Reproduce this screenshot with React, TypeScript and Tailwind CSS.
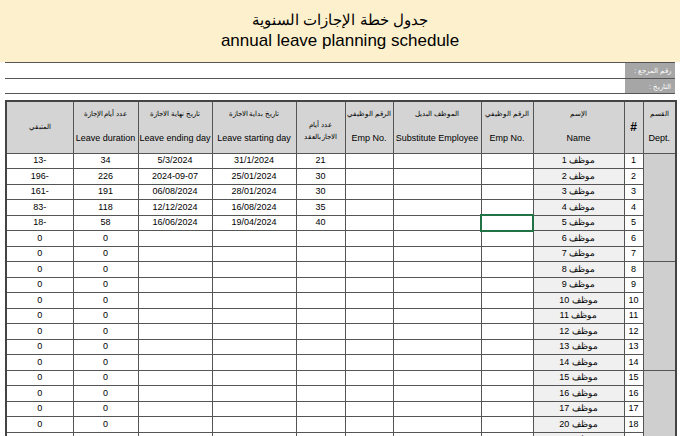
const rows: [string, string, string, string, string][] = [
  ['13-', '34', '5/3/2024', '31/1/2024', '21'],
  ['196-', '226', '2024-09-07', '25/01/2024', '30'],
  ['161-', '191', '06/08/2024', '28/01/2024', '30'],
  ['83-', '118', '12/12/2024', '16/08/2024', '35'],
  ['18-', '58', '16/06/2024', '19/04/2024', '40'],
]

const names = [1, 2, 3, 4, 5, 6, 7, 8, 9, 10, 11, 12, 13, 14, 15, 16, 17, 20, 21]

const td = 'border border-[#555] h-[15.5px] p-0 text-center'

export default function App() {
  return (
    <div className="w-[680px] h-[436px] overflow-hidden bg-white text-black" style={{ fontFamily: '"Liberation Sans", "Noto Sans", sans-serif' }}>
      <div className="h-[62px] bg-[#fdf0cd] flex flex-col items-center justify-center">
        <div className="text-[15px] leading-[20px]" dir="rtl">جدول خطة الإجازات السنوية</div>
        <div className="text-[17px] leading-[22px]">annual leave planning schedule</div>
      </div>
      <div className="px-[5px]">
        <div className="flex h-[16px] border-t border-[#555]">
          <div className="flex-1" />
          <div className="w-[50px] bg-[#a6a6a6] text-white text-[7px] text-right pr-1 leading-[16px]" dir="rtl">رقم المرجع :</div>
        </div>
        <div className="flex h-[16px] border-t border-b border-[#555]">
          <div className="flex-1" />
          <div className="w-[50px] bg-[#a6a6a6] text-white text-[7px] text-right pr-1 leading-[15px]" dir="rtl">التاريخ :</div>
        </div>
        <table className="mt-[6px] w-[670px] border-collapse table-fixed text-[9px] border-2 border-[#444]">
          <colgroup>
            <col className="w-[67px]" />
            <col className="w-[65px]" />
            <col className="w-[74px]" />
            <col className="w-[84px]" />
            <col className="w-[49px]" />
            <col className="w-[48px]" />
            <col className="w-[88px]" />
            <col className="w-[52px]" />
            <col className="w-[91px]" />
            <col className="w-[19px]" />
            <col className="w-[33px]" />
          </colgroup>
          <thead>
            <tr className="h-[52px] bg-[#d4d4d4]">
              <th className="border border-[#555] font-normal text-[7px]" dir="rtl">المتبقي</th>
              <th className="border border-[#555] font-normal"><div className="text-[7px] mb-3" dir="rtl">عدد أيام الإجازة</div>Leave duration</th>
              <th className="border border-[#555] font-normal"><div className="text-[7px] mb-3" dir="rtl">تاريخ نهاية الاجازة</div>Leave ending day</th>
              <th className="border border-[#555] font-normal"><div className="text-[7px] mb-3" dir="rtl">تاريخ بداية الاجازة</div>Leave starting day</th>
              <th className="border border-[#555] font-normal text-[7px] leading-[12px] pt-2" dir="rtl">عدد أيام<br />الاجاز بالعقد</th>
              <th className="border border-[#555] font-normal"><div className="text-[7px] mb-3" dir="rtl">الرقم الوظيفي</div>Emp No.</th>
              <th className="border border-[#555] font-normal"><div className="text-[7px] mb-3" dir="rtl">الموظف البديل</div>Substitute Employee</th>
              <th className="border border-[#555] font-normal"><div className="text-[7px] mb-3" dir="rtl">الرقم الوظيفي</div>Emp No.</th>
              <th className="border border-[#555] font-normal"><div className="text-[7px] mb-3" dir="rtl">الإسم</div>Name</th>
              <th className="border border-[#555] font-bold text-[12px]">#</th>
              <th className="border border-[#555] font-normal"><div className="text-[7px] mb-3" dir="rtl">القسم</div>Dept.</th>
            </tr>
          </thead>
          <tbody>
            {names.map((n, i) => {
              const r = rows[i]
              return (
                <tr key={i}>
                  <td className={td}>{r ? r[0] : '0'}</td>
                  <td className={td}>{r ? r[1] : '0'}</td>
                  <td className={td}>{r ? r[2] : ''}</td>
                  <td className={td}>{r ? r[3] : ''}</td>
                  <td className={td}>{r ? r[4] : ''}</td>
                  <td className={td} />
                  <td className={td} />
                  <td className={i === 4 ? td + ' outline-2 outline-[#217346] -outline-offset-1' : td} />
                  <td className={td + ' bg-[#f0f0f0]'} dir="rtl">موظف {n}</td>
                  <td className={td}>{i + 1}</td>
                  {i % 7 === 0 && <td rowSpan={7} className="border border-[#555] bg-[#cfcfcf] p-0" />}
                </tr>
              )
            })}
          </tbody>
        </table>
      </div>
    </div>
  )
}
